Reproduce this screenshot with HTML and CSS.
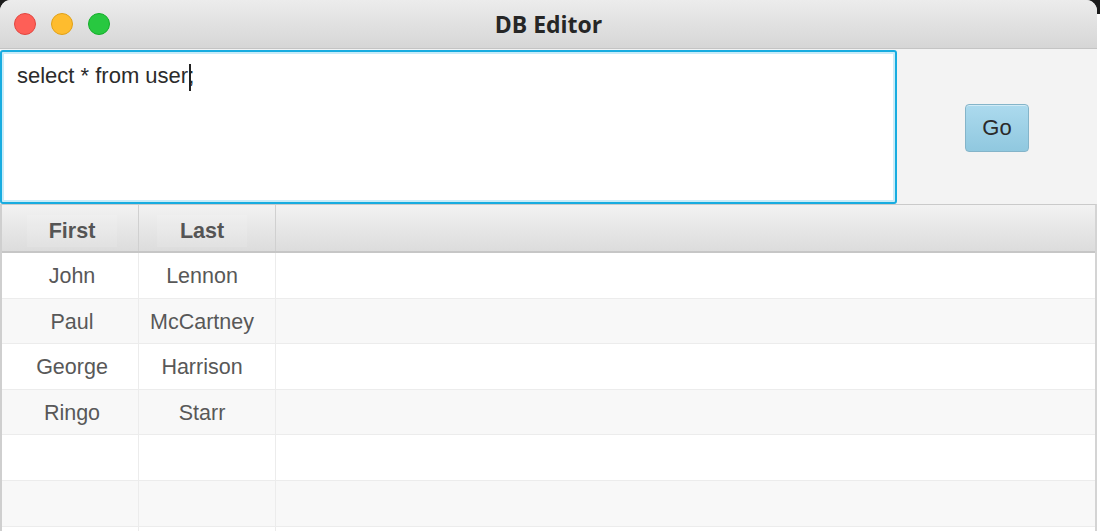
FILE: index.html
```html
<!DOCTYPE html>
<html>
<head>
<meta charset="utf-8">
<link rel="stylesheet" href="styles.css">
</head>
<body>
<div class="window">
  <div class="titlebar">
    <div class="lights">
      <span class="light red"></span>
      <span class="light yellow"></span>
      <span class="light green"></span>
    </div>
    <div class="title">DB Editor</div>
  </div>
  <div class="top">
    <div class="editor"><span class="query">select * from user;</span><span class="caret"></span></div>
    <div class="side">
      <button class="go">Go</button>
    </div>
  </div>
  <div class="table">
    <div class="row head">
      <div class="cell c1"><span class="hl">First</span></div>
      <div class="cell c2"><span class="hl">Last</span></div>
      <div class="cell c3"></div>
    </div>
    <div class="row">
      <div class="cell c1">John</div><div class="cell c2">Lennon</div><div class="cell c3"></div>
    </div>
    <div class="row alt">
      <div class="cell c1">Paul</div><div class="cell c2">McCartney</div><div class="cell c3"></div>
    </div>
    <div class="row">
      <div class="cell c1">George</div><div class="cell c2">Harrison</div><div class="cell c3"></div>
    </div>
    <div class="row alt">
      <div class="cell c1">Ringo</div><div class="cell c2">Starr</div><div class="cell c3"></div>
    </div>
    <div class="row">
      <div class="cell c1"></div><div class="cell c2"></div><div class="cell c3"></div>
    </div>
    <div class="row alt">
      <div class="cell c1"></div><div class="cell c2"></div><div class="cell c3"></div>
    </div>
    <div class="row">
      <div class="cell c1"></div><div class="cell c2"></div><div class="cell c3"></div>
    </div>
  </div>
</div>
</body>
</html>
```

FILE: styles.css
```css
html, body {
  margin: 0;
  padding: 0;
}
body {
  width: 1100px;
  height: 531px;
  overflow: hidden;
  background: linear-gradient(#1c1c1c 0, #1c1c1c 14px, #ffffff 14px);
  font-family: "Liberation Sans", Arial, sans-serif;
}
.window {
  width: 1097px;
  height: 531px;
  background: #f3f3f3;
  border-radius: 11px 11px 0 0;
  overflow: hidden;
  display: flex;
  flex-direction: column;
}
.titlebar {
  height: 48px;
  flex: none;
  background: linear-gradient(#ececec, #d6d6d6);
  border-bottom: 1px solid #c4c4c4;
  display: flex;
  align-items: center;
  justify-content: center;
  position: relative;
}
.lights {
  position: absolute;
  left: 14px;
  top: 13px;
  display: flex;
  gap: 15px;
}
.light {
  width: 22px;
  height: 22px;
  border-radius: 50%;
  box-sizing: border-box;
}
.red { background: #fe5f57; border: 1px solid #e2463f; }
.yellow { background: #febc2e; border: 1px solid #e1a116; }
.green { background: #28c840; border: 1px solid #14ae2a; }
.title {
  font-family: "Open Sans", "Noto Sans", sans-serif;
  font-weight: 700;
  font-size: 23px;
  color: #262626;
  margin-top: -1px;
}
.top {
  height: 155px;
  flex: none;
  display: flex;
  background: #f3f3f3;
}
.editor {
  width: 897px;
  height: 154px;
  margin-top: 1px;
  box-sizing: border-box;
  background: #fff;
  border: 2px solid #17ace0;
  border-radius: 3px;
  box-shadow: inset 0 0 0 2px #c9ecf8;
  padding: 11px 15px;
  font-size: 22px;
  color: #2b2b2b;
  letter-spacing: 0;
  display: flex;
  align-items: flex-start;
}
.query {
  line-height: 26px;
}
.caret {
  display: inline-block;
  width: 1.5px;
  height: 27px;
  background: #222;
  margin-left: -5px;
  margin-top: 1px;
}
.side {
  flex: 1;
  display: flex;
  align-items: center;
  justify-content: center;
  padding-top: 2px;
}
.go {
  width: 64px;
  height: 48px;
  box-sizing: border-box;
  border: 1px solid #84b4c9;
  border-radius: 4px;
  background: linear-gradient(#acdaee, #90c8df);
  box-shadow: inset 0 1px 0 rgba(255,255,255,0.45);
  font-family: "Liberation Sans", Arial, sans-serif;
  font-size: 22px;
  color: #2a2a2a;
  padding: 0;
}
.table {
  flex: 1;
  background: #fff;
  border-left: 2px solid #cfcfcf;
  border-right: 2px solid #d4d4d4;
  border-top: 1px solid #cacaca;
  display: flex;
  flex-direction: column;
}
.row {
  display: flex;
  height: 45.6px;
  box-sizing: border-box;
  border-bottom: 1px solid #ececec;
  flex: none;
}
.row.alt {
  background: #f8f8f8;
}
.row.head {
  height: 48px;
  background: linear-gradient(#f2f2f2, #dcdcdc);
  border-bottom: 2px solid #c6c6c6;
}
.cell {
  box-sizing: border-box;
  display: flex;
  align-items: center;
  justify-content: center;
  font-size: 21.5px;
  color: #585858;
  border-right: 1px solid #ececec;
  padding-top: 3px;
}
.head .cell {
  font-weight: 700;
  color: #555;
  border-right: 1px solid #d0d0d0;
  padding-top: 6px;
}
.head .c3 { border-right: none; }
.hl {
  display: flex;
  align-items: center;
  justify-content: center;
  width: 90px;
  height: 32px;
  background: rgba(255,255,255,0.12);
}
.c1 { width: 137px; padding-left: 4px; }
.c2 { width: 137px; padding-right: 10px; }
.c3 { flex: 1; border-right: none; }
```
